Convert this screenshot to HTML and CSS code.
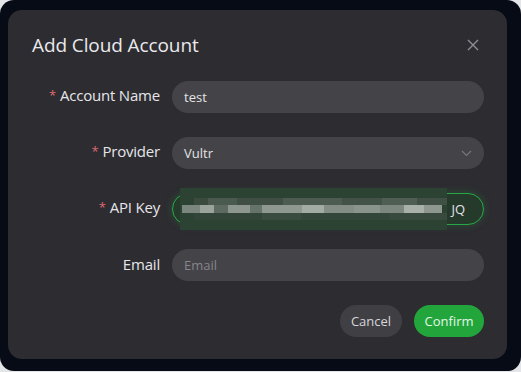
FILE: index.html
```html
<!DOCTYPE html>
<html lang="en">
<head>
    <meta charset="UTF-8">
    <meta name="viewport" content="width=device-width, initial-scale=1.0">
    <title>Add Cloud Account</title>
    <link rel="stylesheet" href="styles.css">
</head>
<body>
    <div class="frame">
        <div class="dialog">
            <div class="dialog-header">
                <h2 class="dialog-title">Add Cloud Account</h2>
                <button class="close-btn" aria-label="Close">
                    <svg width="12" height="12" viewBox="0 0 12 12"><path d="M1 1L11 11M11 1L1 11" stroke="#8f8e94" stroke-width="1.4" fill="none"/></svg>
                </button>
            </div>
            <div class="form">
                <label class="form-label"><span class="req">*</span>Account Name</label>
                <div class="field"><span class="field-text">test</span></div>

                <label class="form-label"><span class="req">*</span>Provider</label>
                <div class="field select">
                    <span class="field-text">Vultr</span>
                    <svg class="chevron" width="11" height="7" viewBox="0 0 11 7"><path d="M1 1L5.5 5.5L10 1" stroke="#77767c" stroke-width="1.2" fill="none"/></svg>
                </div>

                <label class="form-label"><span class="req">*</span>API Key</label>
                <div class="field focused">
                    <div class="blurred">
                        <div class="blur-row top">
                            <i style="width:14px;background:#3b4c3f"></i><i style="width:30px;background:#4a5a4e"></i><i style="width:46px;background:#404f44"></i><i style="width:60px;background:#4c5c50"></i><i style="width:40px;background:#435247"></i><i style="width:36px;background:#4e5e52"></i><i style="width:30px;background:#415045"></i>
                        </div>
                        <div class="blur-row mid">
                            <i style="width:18px;background:#7b877e"></i><i style="width:14px;background:#9aa39c"></i><i style="width:14px;background:#5c6a60"></i><i style="width:22px;background:#8d978f"></i><i style="width:12px;background:#66736a"></i><i style="width:40px;background:#8e9891"></i><i style="width:22px;background:#a3aba5"></i><i style="width:30px;background:#838d85"></i><i style="width:26px;background:#8a948c"></i><i style="width:24px;background:#7c877f"></i><i style="width:20px;background:#a9b0aa"></i><i style="width:18px;background:#8e9891"></i>
                        </div>
                        <div class="blur-row bot">
                            <i style="width:70px;background:#324538"></i><i style="width:40px;background:#3a4c3f"></i><i style="width:90px;background:#33463a"></i><i style="width:60px;background:#384a3d"></i>
                        </div>
                    </div>
                    <span class="field-text key-end">JQ</span>
                </div>

                <label class="form-label">Email</label>
                <div class="field"><span class="field-text placeholder">Email</span></div>
            </div>
            <div class="dialog-footer">
                <button class="btn btn-cancel">Cancel</button>
                <button class="btn btn-confirm">Confirm</button>
            </div>
        </div>
    </div>
</body>
</html>
```

FILE: styles.css
```css
body {
    margin: 0;
    background: #e4e5e8;
    font-family: 'Open Sans', 'Noto Sans', sans-serif;
}
.frame {
    width: 521px;
    height: 371px;
    box-sizing: border-box;
    padding: 10px 14px 12px 8px;
    background: #070b15;
    border-radius: 14px;
}
.dialog {
    height: 349px;
    box-sizing: border-box;
    padding: 20px 23px 22px 24px;
    background: #2d2c31;
    border-radius: 14px;
}
.dialog-header { display: flex; justify-content: space-between; align-items: center; height: 30px; margin-bottom: 21px; }
.dialog-title { margin: 0; font-size: 19px; font-weight: 400; color: #e9e9ec; letter-spacing: -0.1px; }
.close-btn { background: none; border: none; padding: 0; width: 12px; height: 12px; margin-right: 5px; display: flex; cursor: pointer; }

.form { display: grid; grid-template-columns: 128px 312px; column-gap: 12px; row-gap: 24px; align-items: center; }
.form-label { text-align: right; font-size: 15px; color: #e6e6e9; line-height: 20px; padding-bottom: 3px; letter-spacing: -0.2px; }
.req { color: #dc6a72; font-size: 13px; margin-right: 4px; position: relative; top: -1px; }
.field {
    height: 32px;
    box-sizing: border-box;
    border-radius: 16px;
    background: #444348;
    display: flex;
    align-items: center;
    padding: 0 12px;
    position: relative;
    overflow: hidden;
}
.field-text { font-size: 13px; color: #e3e3e6; }
.field-text.placeholder { color: #86858b; }
.select { justify-content: space-between; }

.field.focused {
    background: #263a2c;
    border: 1px solid #27a746;
    box-shadow: 0 0 8px rgba(39, 167, 70, 0.3);
    overflow: visible;
    padding: 0 18px 0 7px;
    justify-content: space-between;
}
.blurred { width: 267px; height: 42px; flex-shrink: 0; display: flex; flex-direction: column; justify-content: center; background: #2c4232; }
.blur-row { display: flex; height: 7px; padding-left: 14px; }
.blur-row.mid { height: 8px; padding-left: 2px; }
.blur-row i { display: block; height: 100%; }
.key-end { margin-left: 2px; }

.dialog-footer { display: flex; justify-content: flex-end; gap: 12px; margin-top: 24px; }
.btn { height: 32px; border: none; border-radius: 16px; font-family: inherit; font-size: 13px; cursor: pointer; }
.btn-cancel { width: 62px; background: #403f44; color: #d6d6d9; }
.btn-confirm { width: 70px; background: #22a63c; color: #e3f6e6; }
```
